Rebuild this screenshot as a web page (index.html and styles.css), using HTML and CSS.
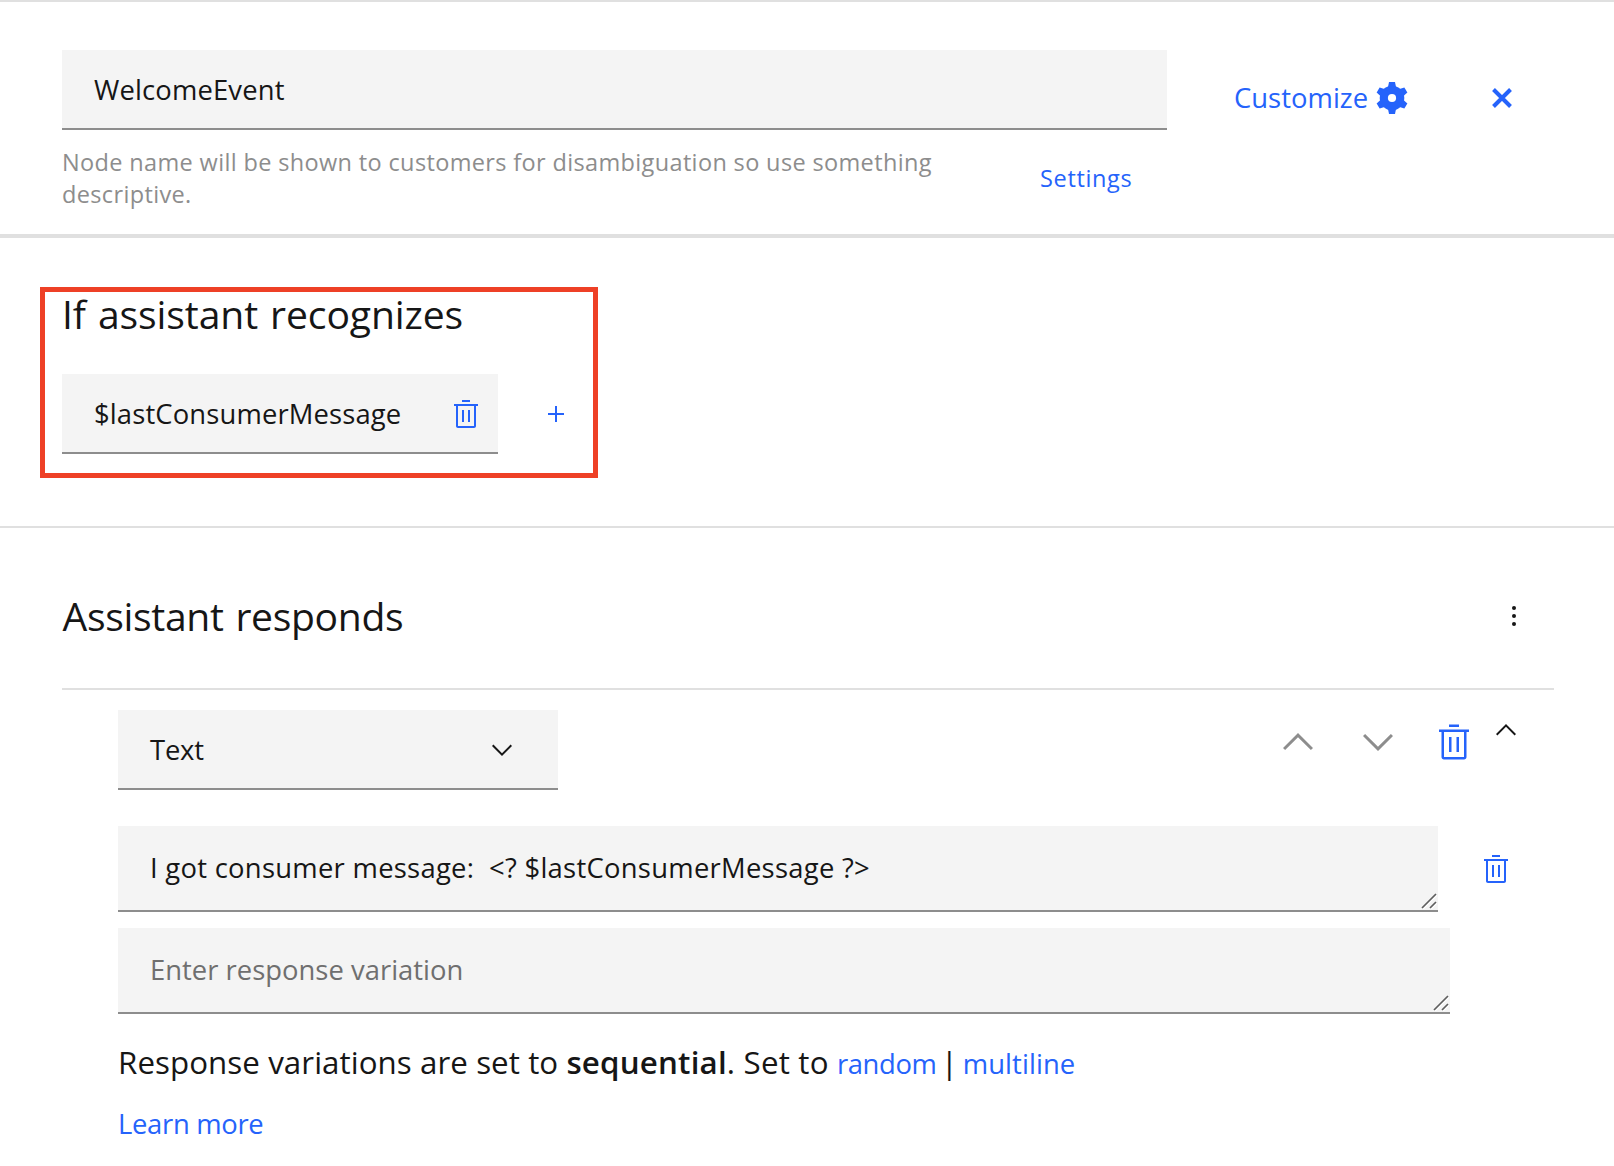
FILE: index.html
```html
<!DOCTYPE html>
<html lang="en">
<head>
<meta charset="utf-8">
<title>WelcomeEvent</title>
<link rel="stylesheet" href="styles.css">
</head>
<body>
<svg class="sprite" aria-hidden="true">
  <symbol id="trash" viewBox="0 0 16 16">
    <path d="M6 1h4v1H6zM6 6h1v6H6zM9 6h1v6H9z"/>
    <path d="M2 3v1h1v10c0 .6.4 1 1 1h8c.6 0 1-.4 1-1V4h1V3zm2 11V4h8v10z"/>
  </symbol>
  <symbol id="chevron-down" viewBox="0 0 16 16">
    <path d="M8 11L3 6l.7-.7L8 9.6l4.3-4.3.7.7z"/>
  </symbol>
  <symbol id="chevron-up" viewBox="0 0 16 16">
    <path d="M8 5l5 5-.7.7L8 6.4l-4.3 4.3L3 10z"/>
  </symbol>
  <symbol id="grip" viewBox="0 0 16 16">
    <path d="M1 15L15 1M9 15l6-6" fill="none" stroke="#fff" stroke-width="1.4" transform="translate(1 1)"/>
    <path d="M1 15L15 1M9 15l6-6" fill="none" stroke="#5f5f5f" stroke-width="1.7"/>
  </symbol>
</svg>

<header class="node-header">
  <div class="name-column">
    <div class="field name-field">WelcomeEvent</div>
    <div class="name-help">
      <p class="help-text">Node name will be shown to customers for disambiguation so use something descriptive.</p>
      <a class="link settings">Settings</a>
    </div>
  </div>
  <div class="header-actions">
    <a class="link customize">Customize</a>
    <svg class="gear" viewBox="0 0 32 32">
      <defs><path id="teeth" d="M13 0h6l1 5v22l-1 5h-6l-1-5V5z"/></defs>
      <circle cx="16" cy="16" r="12.3"/>
      <use href="#teeth"/>
      <use href="#teeth" transform="rotate(60 16 16)"/>
      <use href="#teeth" transform="rotate(120 16 16)"/>
      <circle class="gear-hole" cx="16" cy="16" r="4.1"/>
    </svg>
    <svg class="close" viewBox="0 0 20 20"><path d="M1.5 1.5l17 17M18.5 1.5l-17 17"/></svg>
  </div>
</header>

<section class="recognizes">
  <div class="highlight">
    <h2>If assistant recognizes</h2>
    <div class="condition-row">
      <div class="field condition">
        <span class="condition-text">$lastConsumerMessage</span>
        <svg class="icon"><use href="#trash"/></svg>
      </div>
      <svg class="plus" viewBox="0 0 16 16"><path d="M7 0h2v7h7v2H9v7H7V9H0V7h7z"/></svg>
    </div>
  </div>
</section>

<section class="responds">
  <div class="responds-head">
    <h2 class="responds-title">Assistant responds</h2>
    <svg class="kebab" viewBox="0 0 4 20"><circle cx="2" cy="2" r="2"/><circle cx="2" cy="10" r="2"/><circle cx="2" cy="18" r="2"/></svg>
  </div>
  <div class="response">
    <div class="type-row">
      <div class="field type-select">
        <span class="type-text">Text</span>
        <svg class="icon dark"><use href="#chevron-down"/></svg>
      </div>
      <div class="response-tools">
        <svg class="move"><use href="#chevron-up"/></svg>
        <svg class="move"><use href="#chevron-down"/></svg>
        <svg class="remove"><use href="#trash"/></svg>
        <svg class="icon dark collapse"><use href="#chevron-up"/></svg>
      </div>
    </div>
    <div class="message-row">
      <div class="area message">I got consumer message:&nbsp; &lt;? $lastConsumerMessage ?&gt;<svg class="grip"><use href="#grip"/></svg></div>
      <svg class="icon"><use href="#trash"/></svg>
    </div>
    <div class="area variation">Enter response variation<svg class="grip"><use href="#grip"/></svg></div>
    <p class="mode">Response variations are set to <strong>sequential</strong><span class="set-to">. Set to</span> <a class="link random">random</a> <span class="bar">|</span> <a class="link multiline">multiline</a></p>
    <a class="link learn">Learn more</a>
  </div>
</section>
</body>
</html>
```
FILE: styles.css
```css
* { box-sizing: border-box; }

body {
  margin: 0;
  height: 1166px;
  overflow: hidden;
  background: #fff;
  color: #161616;
  font: 27.4px/40px "Open Sans", "Noto Sans", sans-serif;
  border-top: 2px solid #e0e0e0;
}

h2, p { margin: 0; font-weight: 400; }
svg { display: block; flex: none; fill: #2563fb; }
.sprite { position: absolute; width: 0; height: 0; }
.link { color: #2563fb; }
.icon { width: 32px; height: 32px; }
.icon.dark { fill: #161616; }

.field {
  display: flex;
  align-items: center;
  height: 80px;
  padding-top: 2px;
  background: #f4f4f4;
  border-bottom: 2px solid #8d8d8d;
}

.node-header {
  display: flex;
  height: 236px;
  padding: 48px 0 0 62px;
  border-bottom: 4px solid #e0e0e0;
}
.name-column { width: 1105px; }
.name-field { padding-left: 32px; letter-spacing: 0.15px; }
.name-help { display: flex; padding-top: 16px; font-size: 23.5px; line-height: 32px; }
.help-text { width: 978px; padding-right: 80px; letter-spacing: 0.355px; color: #8d8d8d; }
.settings { padding-top: 16px; letter-spacing: 0.65px; }
.header-actions { display: flex; align-items: center; height: 96px; padding-left: 67px; }
.customize { width: 142px; letter-spacing: 0.03px; }
.gear { width: 32px; height: 32px; margin-right: 84px; }
.gear-hole { fill: #fff; }
.close { width: 20px; height: 20px; fill: none; stroke: #2563fb; stroke-width: 4; }

.recognizes { height: 290px; padding: 49px 0 0 40px; border-bottom: 2px solid #e0e0e0; }
.highlight { width: 558px; height: 191px; padding: 2px 0 0 17px; border: 5px solid #ee4026; }
h2 { font-size: 39.1px; line-height: 40px; letter-spacing: -0.1px; word-spacing: 2px; }
.condition-row { display: flex; align-items: center; gap: 50px; padding-top: 40px; }
.condition { width: 436px; justify-content: space-between; padding: 2px 16px 0 32px; }
.condition-text { letter-spacing: 0.14px; }
.plus { width: 16px; height: 16px; }

.responds { padding: 0 60px 0 62px; }
.responds-head {
  display: flex;
  justify-content: space-between;
  align-items: center;
  height: 162px;
  padding: 16px 38px 0 0.5px;
  border-bottom: 2px solid #e0e0e0;
}
.responds-title { letter-spacing: -0.32px; }
.kebab { width: 4px; height: 20px; fill: #161616; }

.response { padding: 20px 0 0 56px; }
.type-row { display: flex; justify-content: space-between; }
.type-select { width: 440px; justify-content: space-between; padding: 2px 40px 0 32px; }
.type-text { letter-spacing: -0.2px; }
.response-tools { display: flex; padding: 8px 32px 0 0; }
.move { width: 48px; height: 48px; margin-right: 32px; fill: #8d8d8d; }
.remove { width: 40px; height: 40px; margin: 3.5px 16px 0 0; }
.collapse { margin-top: -4px; }

.area {
  position: relative;
  height: 86px;
  padding: 22px 32px 0;
  background: #f4f4f4;
  border-bottom: 2px solid #8d8d8d;
}
.grip { position: absolute; right: 1px; bottom: 1px; width: 16px; height: 16px; }
.message-row { display: flex; align-items: center; gap: 42px; padding-top: 36px; }
.message { width: 1320px; letter-spacing: 0.28px; }
.variation { width: 1332px; margin-top: 16px; letter-spacing: 0.02px; color: #6f6f6f; }
.move + .remove { margin-left: -24px; }
.response-tools .move:nth-child(2) { margin-right: 56px; }
.mode { margin-top: 28px; font-size: 31.3px; letter-spacing: 0.06px; white-space: nowrap; }
.mode strong { font-weight: 600; letter-spacing: 0.18px; }
.set-to { letter-spacing: 0.2px; }
.mode .link { font-size: 27.4px; }
.random { letter-spacing: -0.38px; }
.bar { margin: 0 -3.5px 0 -4px; }
.mode .multiline { letter-spacing: 0.1px; }
.learn { display: block; margin-top: 20px; letter-spacing: -0.3px; }
```
